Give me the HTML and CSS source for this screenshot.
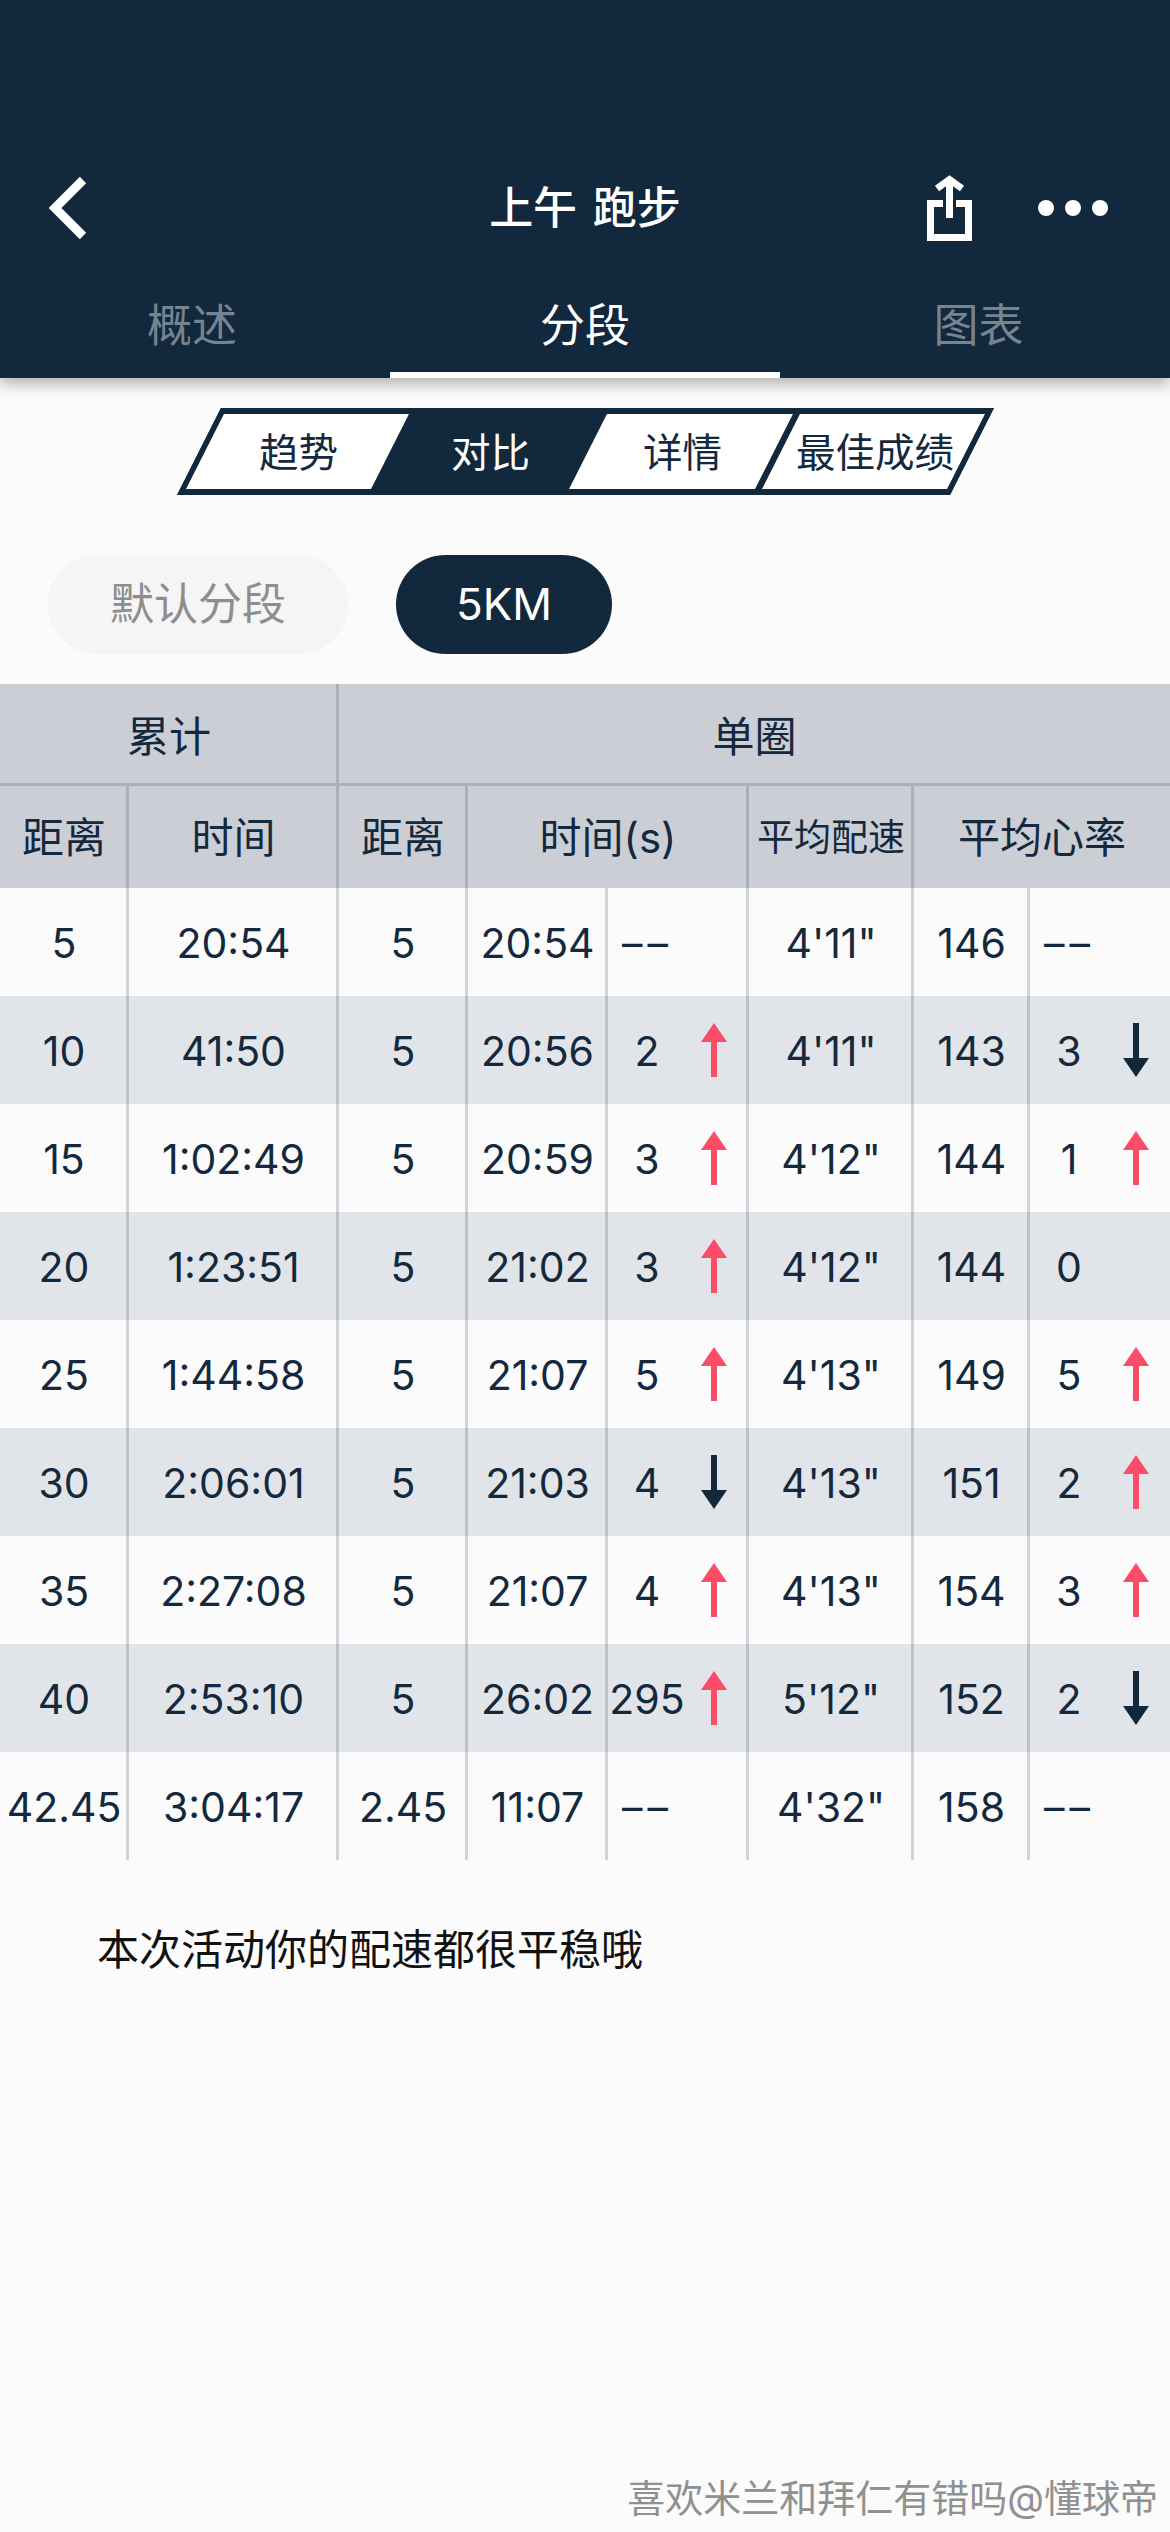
FILE: index.html
```html
<!DOCTYPE html>
<html lang="zh-CN">
<head>
    <meta charset="UTF-8">
    <meta name="viewport" content="width=device-width, initial-scale=1.0">
    <title>上午 跑步</title>
    <link rel="stylesheet" href="styles.css">
</head>
<body>
    <svg class="defs" width="0" height="0">
        <symbol id="up" viewBox="0 0 26 54"><path d="M13 0L26 19H16V54H10V19H0Z"/></symbol>
        <symbol id="down" viewBox="0 0 26 54"><path d="M13 54L26 35H16V0H10V35H0Z"/></symbol>
    </svg>

    <div class="page">
        <header class="top">
            <div class="nav">
                <div class="nav-left">
                    <svg class="back" viewBox="0 0 44 66"><polyline points="37,5 9,33 37,61"/></svg>
                </div>
                <div class="title">上午 跑步</div>
                <div class="nav-right">
                    <svg class="share" viewBox="0 0 45 70">
                        <path d="M16 30.5H3.5V64.5H41.5V30.5H29"/>
                        <path d="M22.5 6.5V45"/>
                        <polyline points="10,15.5 22.5,6.5 35,15.5"/>
                    </svg>
                    <svg class="more" viewBox="0 0 70 16">
                        <circle cx="8" cy="8" r="8"/>
                        <circle cx="35" cy="8" r="8"/>
                        <circle cx="62" cy="8" r="8"/>
                    </svg>
                </div>
            </div>
            <div class="tabs">
                <div class="tab">概述</div>
                <div class="tab active">分段</div>
                <div class="tab">图表</div>
            </div>
        </header>

        <!-- Skewed switcher -->
        <div class="switcher">
            <div class="seg s1"><span>趋势</span></div>
            <div class="seg s2 active"><span>对比</span></div>
            <div class="seg s3"><span>详情</span></div>
            <div class="seg s4"><span>最佳成绩</span></div>
        </div>

        <div class="pills">
            <div class="pill default">默认分段</div>
            <div class="pill km">5KM</div>
        </div>

        <table class="splits">
            <colgroup>
                <col class="c1"><col class="c2"><col class="c3"><col class="c4">
                <col class="c5"><col class="c6"><col class="c7"><col class="c8">
            </colgroup>
            <thead>
                <tr class="group">
                    <th colspan="2" class="line">累计</th>
                    <th colspan="6">单圈</th>
                </tr>
                <tr class="names">
                    <th class="line">距离</th>
                    <th class="line">时间</th>
                    <th class="line">距离</th>
                    <th colspan="2" class="line">时间(s)</th>
                    <th class="line small">平均配速</th>
                    <th colspan="2">平均心率</th>
                </tr>
            </thead>
            <tbody>
                <tr>
                    <td class="line">5</td><td class="line">20:54</td><td class="line">5</td><td class="line">20:54</td>
                    <td class="line"><div class="none">––</div></td>
                    <td class="line">4'11"</td><td class="line">146</td>
                    <td><div class="none">––</div></td>
                </tr>
                <tr>
                    <td class="line">10</td><td class="line">41:50</td><td class="line">5</td><td class="line">20:56</td>
                    <td class="line"><div class="delta"><span>2</span><svg class="arrow rise"><use href="#up"/></svg></div></td>
                    <td class="line">4'11"</td><td class="line">143</td>
                    <td><div class="delta"><span>3</span><svg class="arrow fall"><use href="#down"/></svg></div></td>
                </tr>
                <tr>
                    <td class="line">15</td><td class="line">1:02:49</td><td class="line">5</td><td class="line">20:59</td>
                    <td class="line"><div class="delta"><span>3</span><svg class="arrow rise"><use href="#up"/></svg></div></td>
                    <td class="line">4'12"</td><td class="line">144</td>
                    <td><div class="delta"><span>1</span><svg class="arrow rise"><use href="#up"/></svg></div></td>
                </tr>
                <tr>
                    <td class="line">20</td><td class="line">1:23:51</td><td class="line">5</td><td class="line">21:02</td>
                    <td class="line"><div class="delta"><span>3</span><svg class="arrow rise"><use href="#up"/></svg></div></td>
                    <td class="line">4'12"</td><td class="line">144</td>
                    <td><div class="delta"><span>0</span></div></td>
                </tr>
                <tr>
                    <td class="line">25</td><td class="line">1:44:58</td><td class="line">5</td><td class="line">21:07</td>
                    <td class="line"><div class="delta"><span>5</span><svg class="arrow rise"><use href="#up"/></svg></div></td>
                    <td class="line">4'13"</td><td class="line">149</td>
                    <td><div class="delta"><span>5</span><svg class="arrow rise"><use href="#up"/></svg></div></td>
                </tr>
                <tr>
                    <td class="line">30</td><td class="line">2:06:01</td><td class="line">5</td><td class="line">21:03</td>
                    <td class="line"><div class="delta"><span>4</span><svg class="arrow fall"><use href="#down"/></svg></div></td>
                    <td class="line">4'13"</td><td class="line">151</td>
                    <td><div class="delta"><span>2</span><svg class="arrow rise"><use href="#up"/></svg></div></td>
                </tr>
                <tr>
                    <td class="line">35</td><td class="line">2:27:08</td><td class="line">5</td><td class="line">21:07</td>
                    <td class="line"><div class="delta"><span>4</span><svg class="arrow rise"><use href="#up"/></svg></div></td>
                    <td class="line">4'13"</td><td class="line">154</td>
                    <td><div class="delta"><span>3</span><svg class="arrow rise"><use href="#up"/></svg></div></td>
                </tr>
                <tr>
                    <td class="line">40</td><td class="line">2:53:10</td><td class="line">5</td><td class="line">26:02</td>
                    <td class="line"><div class="delta"><span>295</span><svg class="arrow rise"><use href="#up"/></svg></div></td>
                    <td class="line">5'12"</td><td class="line">152</td>
                    <td><div class="delta"><span>2</span><svg class="arrow fall"><use href="#down"/></svg></div></td>
                </tr>
                <tr>
                    <td class="line">42.45</td><td class="line">3:04:17</td><td class="line">2.45</td><td class="line">11:07</td>
                    <td class="line"><div class="none">––</div></td>
                    <td class="line">4'32"</td><td class="line">158</td>
                    <td><div class="none">––</div></td>
                </tr>
            </tbody>
        </table>

        <p class="message">本次活动你的配速都很平稳哦</p>

        <div class="watermark">喜欢米兰和拜仁有错吗@懂球帝</div>
    </div>
</body>
</html>
```

FILE: styles.css
```css
* {
    box-sizing: border-box;
}
html, body {
    margin: 0;
    padding: 0;
}
body {
    background-color: #fbfbfb;
    color: #14293d;
    font-family: Inter, "Noto Sans CJK SC", sans-serif;
}
.defs {
    position: absolute;
}
.page {
    display: flex;
    flex-direction: column;
    height: 2532px;
    overflow: hidden;
}

/* Header */
.top {
    position: relative;
    height: 378px;
    padding-top: 150px;
    background-color: #12283d;
    color: white;
    box-shadow: 0 6px 14px rgba(0, 0, 0, 0.3);
}
.nav {
    display: grid;
    grid-template-columns: 1fr auto 1fr;
    align-items: center;
    height: 115px;
}
.nav-left {
    padding-left: 46px;
    display: flex;
}
.nav-right {
    display: flex;
    align-items: center;
    justify-content: flex-end;
    gap: 66px;
    padding-right: 62px;
}
.back {
    width: 44px;
    height: 66px;
    fill: none;
    stroke: white;
    stroke-width: 9;
}
.share {
    width: 45px;
    height: 70px;
    fill: none;
    stroke: white;
    stroke-width: 7;
}
.more {
    width: 70px;
    height: 16px;
    fill: white;
}
.title {
    padding-bottom: 5px;
    font-size: 44px;
    font-weight: 500;
    word-spacing: 4px;
}
.tabs {
    display: flex;
    height: 113px;
}
.tab {
    flex: 0 0 390px;
    padding-top: 30px;
    text-align: center;
    font-size: 45px;
    line-height: 62px;
    color: #75848f;
}
.tab:first-child {
    padding-right: 6px;
}
.tab:last-child {
    padding-left: 7px;
}
.tab.active {
    color: white;
    border-bottom: 6px solid white;
}

/* Switcher */
.switcher {
    display: flex;
    width: 773px;
    height: 87px;
    margin: 30px auto 0;
    border: 6px solid #12283d;
    background-color: #12283d;
    transform: skewX(-26.8deg);
}
.seg {
    display: flex;
    align-items: center;
    justify-content: center;
    padding-bottom: 5px;
    background-color: white;
    font-size: 39.5px;
}
.seg span {
    transform: skewX(26.8deg);
    white-space: nowrap;
}
.seg.active {
    background-color: transparent;
    color: white;
}
.s1 { width: 185px; }
.s2 { width: 198px; }
.s3 { width: 186px; }
.s4 { width: 185px; margin-left: 7px; }

/* Pills */
.pills {
    display: flex;
    gap: 48px;
    margin-top: 60px;
    padding-left: 48px;
}
.pill {
    height: 99px;
    border-radius: 50px;
    text-align: center;
    font-size: 44px;
    line-height: 99px;
}
.pill.default {
    width: 300px;
    background-color: #f5f5f5;
    color: #8e8e8e;
}
.pill.km {
    width: 216px;
    background-color: #12283d;
    color: white;
}

/* Table */
.splits {
    width: 1170px;
    margin-top: 30px;
    border-collapse: separate;
    border-spacing: 0;
    table-layout: fixed;
    font-size: 41px;
}
.c1 { width: 129px; }
.c2 { width: 210px; }
.c3 { width: 129px; }
.c4 { width: 140px; }
.c5 { width: 141px; }
.c6 { width: 165px; }
.c7 { width: 116px; }
.c8 { width: 140px; }
.splits th {
    padding: 0;
    background-color: #cbced4;
    font-weight: 400;
    font-size: 42px;
}
.splits th.line {
    padding-left: 2px;
}
.splits th.small {
    font-size: 37px;
}
.group th {
    height: 102px;
    border-bottom: 3px solid rgba(20, 41, 61, 0.18);
}
.names th {
    height: 102px;
    padding-bottom: 5px;
}
.splits td {
    height: 108px;
    padding: 1px 0 0 2px;
    text-align: center;
    white-space: nowrap;
}
.splits .line {
    border-right: 3px solid rgba(20, 41, 61, 0.18);
}
tbody tr:nth-child(even) td {
    background-color: #e1e4e8;
}
.delta {
    display: flex;
    align-items: center;
    margin-left: -2px;
}
.delta span {
    width: 78px;
    text-align: center;
}
.none {
    margin-left: -2px;
    padding-left: 14px;
    text-align: left;
    letter-spacing: 5px;
}
.arrow {
    width: 26px;
    height: 54px;
    margin: 0 0 1px 15px;
}
.rise {
    fill: #fb4d68;
}
.fall {
    fill: #12283d;
}

.message {
    margin: 60px 0 0;
    padding-left: 97px;
    color: #111;
    font-size: 42px;
    line-height: 60px;
}
.watermark {
    margin-top: auto;
    padding: 0 12px 4px 0;
    text-align: right;
    color: #909090;
    font-size: 38px;
    line-height: 60px;
}
```
